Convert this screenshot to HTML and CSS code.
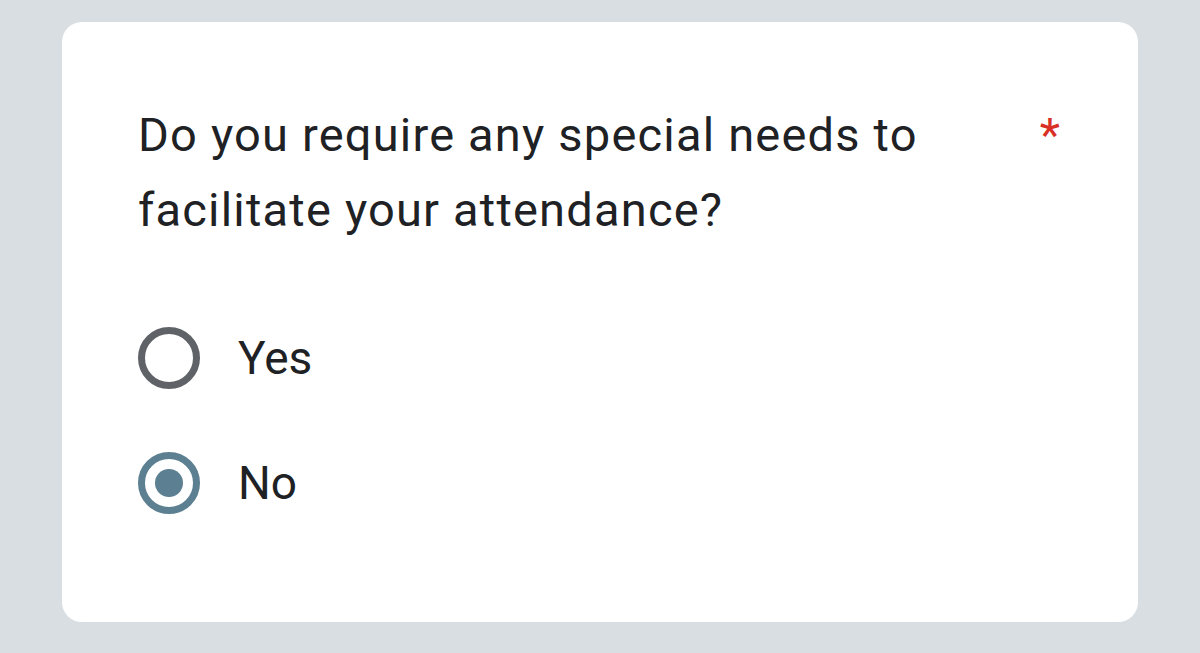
FILE: index.html
```html
<!DOCTYPE html>
<html>
<head>
<meta charset="utf-8">
<link rel="stylesheet" href="styles.css">
</head>
<body>
<div class="card">
  <div class="question">
    <div class="q-text">Do you require any special needs to facilitate your attendance?</div>
    <span class="req">*</span>
  </div>
  <div class="options">
    <div class="option">
      <span class="radio"></span>
      <span class="label">Yes</span>
    </div>
    <div class="option">
      <span class="radio checked"></span>
      <span class="label">No</span>
    </div>
  </div>
</div>
</body>
</html>
```

FILE: styles.css
```css
html, body {
  margin: 0;
  padding: 0;
  background: #d8dee2;
}
body {
  padding: 22px 62px;
  font-family: Roboto, "Noto Sans", sans-serif;
  color: #202124;
}
.card {
  background: #ffffff;
  border-radius: 20px;
  height: 600px;
  box-sizing: border-box;
  padding: 75px 78px 0 76px;
}
.question {
  display: flex;
  align-items: flex-start;
  font-size: 47px;
  line-height: 75px;
}
.q-text {
  flex: 1;
  max-width: 860px;
  letter-spacing: 1.2px;
}
.req {
  margin-left: auto;
  color: #d93025;
  line-height: 75px;
}
.options {
  display: flex;
  flex-direction: column;
  gap: 63px;
  margin-top: 80px;
}
.option {
  display: flex;
  align-items: center;
  height: 62px;
  font-size: 46px;
  line-height: 62px;
}
.radio {
  width: 62px;
  height: 62px;
  box-sizing: border-box;
  border: 7px solid #5f6368;
  border-radius: 50%;
  display: flex;
  align-items: center;
  justify-content: center;
  flex: none;
}
.radio.checked {
  border-color: #5c7f91;
}
.radio.checked::after {
  content: "";
  width: 28px;
  height: 28px;
  border-radius: 50%;
  background: #5c7f91;
}
.label {
  margin-left: 38px;
}
```
